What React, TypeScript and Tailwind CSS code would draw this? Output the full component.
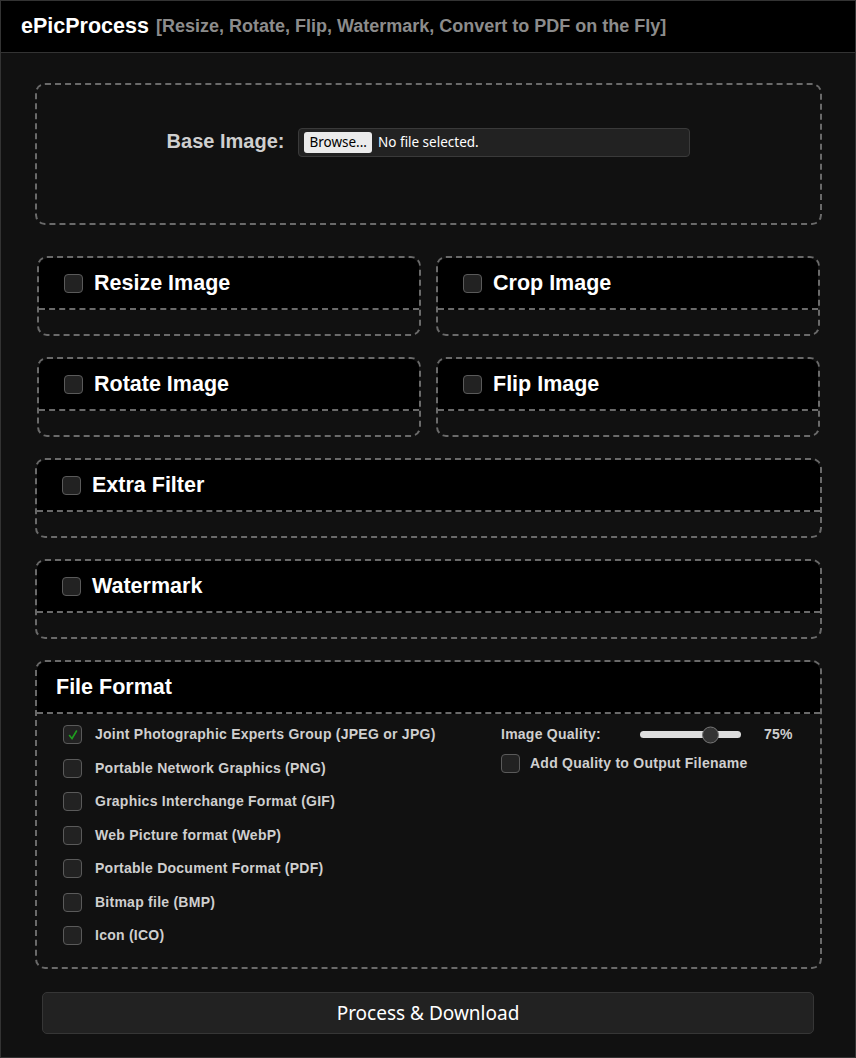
import { useState } from 'react';

const formats = [
    'Joint Photographic Experts Group (JPEG or JPG)',
    'Portable Network Graphics (PNG)',
    'Graphics Interchange Format (GIF)',
    'Web Picture format (WebP)',
    'Portable Document Format (PDF)',
    'Bitmap file (BMP)',
    'Icon (ICO)',
];

function Box({ checked }: { checked?: boolean }) {
    return (
        <span className="flex h-[19px] w-[19px] shrink-0 items-center justify-center rounded-[4px] border border-[#5a5a5a] bg-[#222]">
            {checked && (
                <svg width="12" height="12" viewBox="0 0 12 12" fill="none">
                    <path d="M2.5 6.5 L5 9.5 L9.5 2" stroke="#1f9d1f" strokeWidth="1.6" strokeLinecap="round" />
                </svg>
            )}
        </span>
    );
}

function OptionCard({ title }: { title: string }) {
    return (
        <div className="h-[80px] rounded-[10px] border-2 border-dashed border-[#6a6a6a]">
            <div className="flex h-[52px] items-center gap-[11px] rounded-t-[9px] border-b-2 border-dashed border-[#6a6a6a] bg-black pl-[25px]">
                <Box />
                <span className="text-[21.5px] font-bold text-white">{title}</span>
            </div>
        </div>
    );
}

export default function App() {
    const [quality] = useState(75);
    const [selected] = useState(0);

    return (
        <div className="min-h-[1058px] border border-[#333] bg-[#111] font-['Liberation_Sans',Arial,sans-serif]">
            <div className="flex h-[52px] items-center gap-[7px] border-b border-[#333] bg-black pl-[20px] pb-[1px]">
                <span className="text-[21.5px] font-bold text-white">ePicProcess</span>
                <span className="text-[18px] font-bold text-[#8c8c8c]">[Resize, Rotate, Flip, Watermark, Convert to PDF on the Fly]</span>
            </div>

            <div className="pl-[34px] pr-[33px] pt-[30px] pb-[22px]">
                <div className="flex h-[142px] justify-center gap-[14px] rounded-[10px] border-2 border-dashed border-[#6a6a6a] pt-[43px]">
                    <span className="-mt-[2px] text-[20px] font-bold text-[#cfcfcf]">Base Image:</span>
                    <div className="flex h-[29px] w-[392px] items-center gap-[6px] rounded-[4px] border border-[#3a3a3a] bg-[#222] pl-[5px] font-['Noto_Sans',sans-serif] text-[13.5px] text-white">
                        <span className="rounded-[3px] bg-[#ebebeb] px-[5px] leading-[21px] text-black">Browse...</span>
                        <span>No file selected.</span>
                    </div>
                </div>

                <div className="mt-[31px] grid grid-cols-2 gap-x-[15px] gap-y-[21px] px-[2px]">
                    <OptionCard title="Resize Image" />
                    <OptionCard title="Crop Image" />
                    <OptionCard title="Rotate Image" />
                    <OptionCard title="Flip Image" />
                </div>

                <div className="mt-[21px] flex flex-col gap-[21px]">
                    <OptionCard title="Extra Filter" />
                    <OptionCard title="Watermark" />

                    <div className="h-[309px] rounded-[10px] border-2 border-dashed border-[#6a6a6a]">
                        <div className="flex h-[52px] items-center rounded-t-[9px] border-b-2 border-dashed border-[#6a6a6a] bg-black pl-[19px]">
                            <span className="text-[21.5px] font-bold text-white">File Format</span>
                        </div>
                        <div className="flex pt-[11px]">
                            <div className="flex w-[464px] flex-col gap-[14.5px] pl-[26px]">
                                {formats.map((f, i) => (
                                    <div key={f} className="flex h-[19px] items-center gap-[13px]">
                                        <Box checked={i === selected} />
                                        <span className="text-[14px] font-bold leading-[19px] tracking-[0.25px] text-[#cfcfcf]">{f}</span>
                                    </div>
                                ))}
                            </div>
                            <div className="flex flex-col gap-[9px]">
                                <div className="flex h-[19px] items-center text-[14px] font-bold tracking-[0.25px] text-[#cfcfcf]">
                                    <span className="w-[139px]">Image Quality:</span>
                                    <div className="relative h-[7px] w-[101px] rounded-full bg-[#dcdcdc]">
                                        <span className="absolute top-1/2 left-[62px] h-[17px] w-[17px] -translate-y-1/2 rounded-full border border-[#777] bg-[#333]" />
                                    </div>
                                    <span className="ml-[23px]">{quality}%</span>
                                </div>
                                <div className="flex items-center gap-[10px]">
                                    <Box />
                                    <span className="text-[14px] font-bold tracking-[0.25px] text-[#cfcfcf]">Add Quality to Output Filename</span>
                                </div>
                            </div>
                        </div>
                    </div>
                </div>

                <button className="mt-[23px] ml-[7px] flex h-[42px] w-[772px] items-center justify-center rounded-[5px] border border-[#363636] bg-[#222] font-['Noto_Sans',sans-serif] text-[19px] text-white">
                    Process &amp; Download
                </button>
            </div>
        </div>
    );
}
